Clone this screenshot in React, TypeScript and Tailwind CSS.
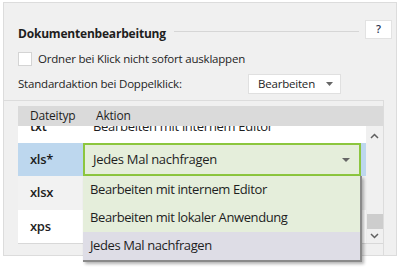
import React from "react";

const font = { fontFamily: '"Open Sans", "Segoe UI", sans-serif' };

const ChevronDown = ({ w = 7 }: { w?: number }) => (
  <svg width={w} height="4" viewBox="0 0 8 4" preserveAspectRatio="none">
    <path d="M0 0h8L4 4z" fill="#666" />
  </svg>
);

const Caret = ({ up }: { up?: boolean }) => (
  <svg width="9" height="6" viewBox="0 0 9 6">
    <path
      d={up ? "M1 5l3.5-3.5L8 5" : "M1 1l3.5 3.5L8 1"}
      stroke="#606060"
      strokeWidth="1.5"
      fill="none"
    />
  </svg>
);

const options = [
  "Bearbeiten mit internem Editor",
  "Bearbeiten mit lokaler Anwendung",
  "Jedes Mal nachfragen",
];

export default function App() {
  return (
    <div className="w-[400px] h-[270px] bg-white pt-[2px] pl-[3px] text-[#1e1e1e] overflow-hidden" style={font}>
      <div className="w-[394px] h-[254px] bg-[#f0f0f0] border border-[#dcdcdc] flex flex-col">
        {/* Title */}
        <div className="flex items-center h-[40px] pt-[22px] pl-[14px] pr-[4px]">
          <span className="text-[12px] font-bold tracking-[-0.2px]">Dokumentenbearbeitung</span>
          <div className="flex-1 h-px bg-[#d6d6d6] ml-[8px] mr-[6px] -mt-[6px]" />
          <button className="w-[27px] h-[19px] -mt-[10px] bg-white border border-[#e2e2e2] text-[11px] font-semibold text-[#2a3550]">?</button>
        </div>

        {/* Checkbox */}
        <div className="flex items-center pl-[14px] mt-[8px] h-[15px]">
          <div className="w-[14px] h-[14px] bg-white border border-[#d4d4d4]" />
          <span className="ml-[6px] text-[11.5px] tracking-[-0.2px]">Ordner bei Klick nicht sofort ausklappen</span>
        </div>

        {/* Default action */}
        <div className="flex items-center pl-[14px] mt-[8px] h-[20px]">
          <span className="w-[230px] text-[11.5px] tracking-[-0.2px]">Standardaktion bei Doppelklick:</span>
          <div className="w-[93px] h-[20px] bg-white border border-[#e0e0e0] flex items-center pl-[9px] pr-[7px]">
            <span className="flex-1 text-[11.5px] tracking-[-0.2px]">Bearbeiten</span>
            <ChevronDown />
          </div>
        </div>

        {/* Table section */}
        <div className="mt-[6px] w-[380px] flex-1 border-t border-r border-[#dcdcdc] pl-[14px] pt-[5px] relative">
          <div className="w-[365px] h-[138px] flex flex-col border-b border-[#d8d8d8]">
            <div className="h-[20px] bg-[#dadada] flex items-center text-[12px] tracking-[-0.2px] shrink-0">
              <span className="w-[78px] pl-[12px]">Dateityp</span>
              <span>Aktion</span>
            </div>
            <div className="flex flex-1 overflow-hidden">
              <div className="w-[348px] overflow-hidden bg-white">
                <div className="-mt-[16px] text-[13px] tracking-[-0.3px]">
                  <div className="h-[33px] flex items-center bg-white">
                    <span className="w-[65px] pl-[12px] font-semibold">txt</span>
                    <span className="pl-[10px]">Bearbeiten mit internem Editor</span>
                  </div>
                  <div className="h-[33px] flex items-center bg-[#bdd7ee]">
                    <span className="w-[65px] pl-[12px] font-semibold">xls*</span>
                    <div className="w-[278px] h-[33px] bg-[#e5eedb] border-2 border-[#8cc63e] flex items-center pl-[8px] pr-[9px]">
                      <span className="flex-1">Jedes Mal nachfragen</span>
                      <ChevronDown w={8} />
                    </div>
                  </div>
                  <div className="h-[34px] flex items-center bg-[#f2f2f2]">
                    <span className="w-[65px] pl-[12px] font-semibold">xlsx</span>
                  </div>
                  <div className="h-[33px] flex items-center bg-white">
                    <span className="w-[65px] pl-[12px] font-semibold">xps</span>
                  </div>
                </div>
              </div>
              {/* Scrollbar */}
              <div className="w-[17px] bg-[#f0f0f0] flex flex-col items-center pt-[7px] pb-[4px]">
                <Caret up />
                <div className="flex-1" />
                <div className="w-[16px] h-[15px] bg-[#cdcdcd] mb-[4px]" />
                <Caret />
              </div>
            </div>
          </div>

          {/* Open dropdown list */}
          <div className="absolute left-[79px] top-[75px] w-[279px] bg-[#e5eedb] border-r-2 border-b-2 border-[#8a8a8a] shadow-[2px_2px_3px_rgba(0,0,0,0.3)] text-[13px] tracking-[-0.4px]">
            {options.map((o, i) => (
              <div
                key={o}
                className={`h-[28px] flex items-center pl-[7px] ${i === 2 ? "bg-[#dedde6]" : ""}`}
              >
                {o}
              </div>
            ))}
          </div>
        </div>
      </div>
    </div>
  );
}
